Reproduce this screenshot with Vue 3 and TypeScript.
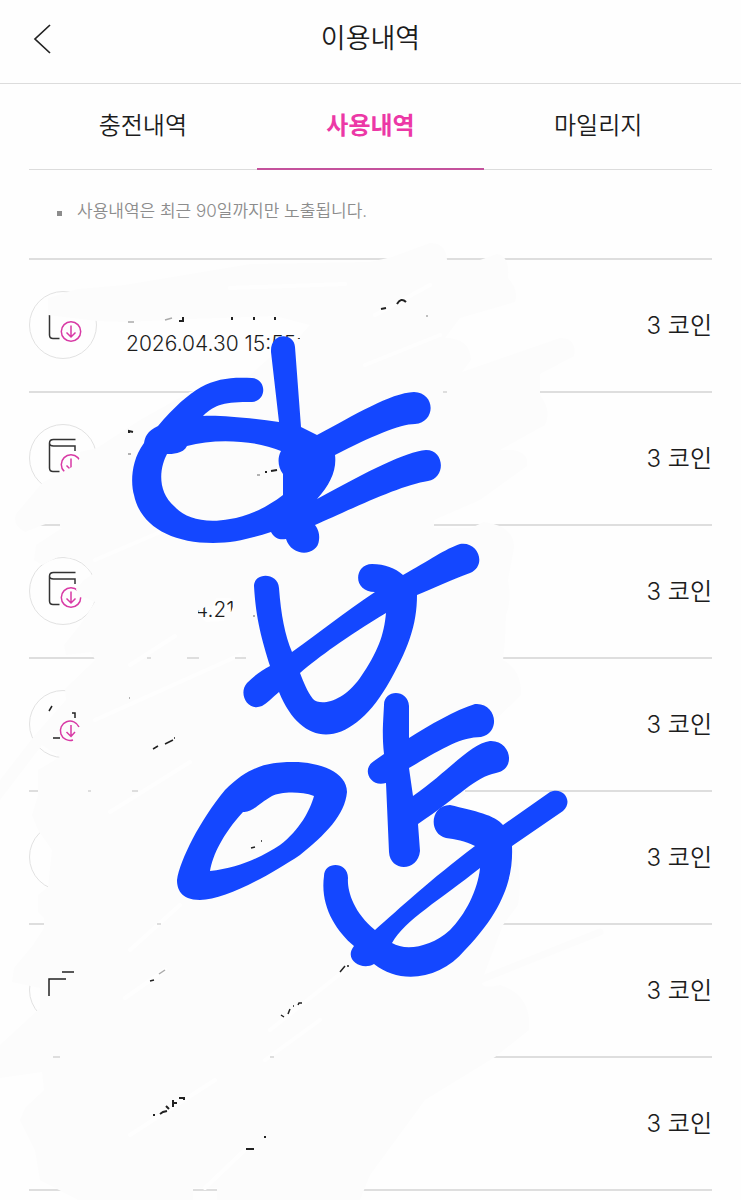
<script setup lang="ts">
import { ref } from 'vue'

type IconKind = 'book' | 'ring' | 'none'

interface Usage {
  id: number
  icon: IconKind
  date: string
  coins: number
}

const tabs: string[] = ['충전내역', '사용내역', '마일리지']
const active = ref<number>(1)

const usages: Usage[] = [
  { id: 1, icon: 'book', date: '2026.04.30 15:55:', coins: 3 },
  { id: 2, icon: 'book', date: '', coins: 3 },
  { id: 3, icon: 'book', date: '2026.04.21', coins: 3 },
  { id: 4, icon: 'ring', date: '', coins: 3 },
  { id: 5, icon: 'ring', date: '', coins: 3 },
  { id: 6, icon: 'ring', date: '', coins: 3 },
  { id: 7, icon: 'none', date: '', coins: 3 },
]
</script>

<template>
  <main class="page">
    <header class="header">
      <button class="back" type="button" aria-label="뒤로">
        <svg width="20" height="32" viewBox="0 0 20 32" aria-hidden="true">
          <path d="M17 2 L2 16 L17 30" fill="none" stroke="#222" stroke-width="1.700" />
        </svg>
      </button>
      <h1 class="title">이용내역</h1>
    </header>

    <nav class="tabs">
      <button
        v-for="(tab, i) in tabs"
        :key="tab"
        type="button"
        class="tab"
        :class="{ active: i === active }"
        @click="active = i"
      >{{ tab }}</button>
    </nav>

    <p class="notice"><span class="bullet"></span>사용내역은 최근 90일까지만 노출됩니다.</p>

    <ul class="list">
      <li v-for="item in usages" :key="item.id" class="row">
        <svg class="icon" width="70" height="70" viewBox="0 0 70 70" aria-hidden="true">
          <circle v-if="item.icon !== 'none'" cx="35" cy="35" r="33.5" fill="none" stroke="#e2e2e2" />
          <g v-if="item.icon === 'book'" fill="none">
            <path
              d="M47.5 16.5H25.500Q21.500 16.500 21.500 20Q21.500 23 25.500 23H47V28M21.500 20V45Q21.500 48.500 25 48.500H31.500"
              stroke="#333" stroke-width="1.500"
            />
            <circle cx="43" cy="41.500" r="9.700" stroke="#d83aa5" stroke-width="1.500" />
            <path d="M43 35.500V47M38.500 42.500L43 47L47.500 42.500" stroke="#d83aa5" stroke-width="1.500" />
          </g>
        </svg>
        <time class="date">{{ item.date }}</time>
        <strong class="coins">{{ item.coins }} 코인</strong>
      </li>
    </ul>

    <svg class="scribble" viewBox="0 0 741 1200" aria-hidden="true">
      <!-- eraser -->
      <path
        fill="#fcfcfc"
        fill-rule="evenodd"
        d="M48 315V298L78 289L125 285L250 264L370 262L392 257L430 243Q446 243 447 260L480 260L497 254Q510 256 508 278Q519 290 515 302L460 318L445 338Q470 338 471 360L462 372L560 338Q577 338 574 356L540 374V395Q552 410 545 425L500 450Q530 448 527 466L480 500L434 520V528L471 528L484 522Q515 526 514 548L508 580Q512 600 506 615L505 640L503 660Q522 670 521 695L480 735L465 780V795L440 830L515 850Q523 880 518 905L503 925L482 980Q480 990 500 985Q532 995 529 1030L495 1057L425 1100L370 1175L360 1200H217V1188H193V1200H78L40 1180L35 1150L20 1120L25 1108L44 1090L42 1072L0 1078V1045L40 1008V988L12 982L14 968L33 945L44 928V918L38 912V895L48 887L52 850L38 830L32 815L38 795V770L60 757L42 745L0 800V780L35 735L66 700L65 689L95 660L91 652L66 655L64 645L80 625L95 602L86 598L78 597L76 589L84 580L93 574L80 560L60 556L42 565L34 560L36 545L62 528L48 523L25 532Q12 525 16 514L32 495L42 483L61 473L72 467L80 458L80 452L97 448L140 420L190 392L250 375L276 352V339H300V336L310 325L275 316L190 319L125 322L97 321Z
           M198 611L209 605L211 611L216 598L231 598L234 604L231 612L225 612L224 621L206 622L198 615Z"
      />
      <path d="M480 980L600 932" stroke="#fcfcfc" stroke-width="7" stroke-linecap="round" />
      <g fill="none" stroke="#fefefe" stroke-width="4" stroke-linecap="round">
        <path d="M230 288L345 284M375 315L430 285M365 365L440 335M95 560L165 530M130 665L175 636M95 720L240 655M110 812L190 762M130 950L180 905M125 998L165 970M270 1030L345 970M130 1135L215 1080M205 1188L250 1145M265 1060L320 1020" />
      </g>
      <g fill="none" stroke="#dedede" stroke-width="2">
        <path d="M443 392H447M50 525H60M147 658H151M187 658H199M235 658H246M88 791H91M132 791H138M157 924H161M53 1057H60M270 1057H274" />
      </g>

      <!-- marks left showing between the eraser strokes -->
      <g fill="none" stroke="#222" stroke-width="1.500">
        <path d="M49 711L52 706M72 713H75V718M53 738H60" />
        <path d="M49 996V979H66M62 972H74" />
        <path d="M179 321H183V317M232 317V320M254 317V320M275 317V320M381 309L386 308M397 304Q401 297 406 302" stroke-width="2" />
        <path d="M165 320L172 318M128 322H134M427 315V317" stroke="#aaa" />
        <path d="M129 433V431L133 432M265 472H267M271 471L277 470" stroke-width="2" />
        <path d="M128 454H131M257 475H260M254 615V617M129 698H130" stroke="#999" />
        <path d="M153 749L158 746M165 744L173 740M174 738H175M251 848L255 847M261 841H262" />
        <path d="M150 981L154 980M340 972L345 966M347 966H349M281 1015L284 1017M288 1014L290 1009M293 1006H294M298 1005L299 1003H302" />
        <path d="M159 974L165 970" stroke="#aaa" />
        <path d="M153 1115H155M160 1114L163 1112L167 1111M166 1106L169 1109M173 1100V1107M173 1103H177M179 1098H184V1100M246 1149H254M264 1137H266" stroke-width="2" />
      </g>
      <g fill="none" stroke="#d83aa5" stroke-width="1.500">
        <path d="M79 727A9.700 9.700 0 1 0 73 740M71 725V736M66.500 732L71 736.500L75 732" />
      </g>

      <!-- blue pen -->
      <g fill="#1447ff" fill-rule="evenodd">
        <path
          d="M252 378C215 376 195 383 158 426C147 431 145 437 144 443C130 462 131 485 134 495C140 525 170 543 213 543C235 543 252 538 271 532C275 539 280 540 286 539C292 558 318 556 319 540C320 532 317 528 315 525C345 512 400 485 428 481C446 478 445 450 426 450C405 452 370 470 317 499C330 485 337 470 335 455C370 437 400 424 415 424C436 422 436 393 414 392C390 393 355 415 317 435L301 427L295 347C294 332 270 332 271 352L279 422C250 418 220 415 203 416C215 404 225 402 252 402C267 401 267 379 252 378Z
             M167 454C172 454 183 454 187 446C215 438 255 440 281 451C277 458 278 468 283 474V495C265 509 245 517 230 519C205 524 185 518 175 507C155 490 161 465 167 454Z"
        />
        <path
          d="M254 586C254 572 278 572 279 588C281 615 285 635 292 652C320 632 345 612 375 592C352 592 354 564 372 564C385 564 395 568 403 575C430 560 445 549 460 544C479 541 487 566 470 573C450 580 435 588 417 595C417 625 408 650 387 686C350 748 303 751 279 692C272 698 267 703 262 706C247 712 238 693 247 683C255 675 262 670 270 666C262 640 256 620 254 586Z
             M386 613C384 635 378 652 360 678C342 703 320 706 313 699C307 691 304 683 300 673C320 656 345 638 386 613Z"
        />
        <path
          d="M293 762C320 762 347 772 347 792C345 815 325 835 300 855C270 875 225 900 200 900C180 900 177 888 177 880C180 860 200 820 225 790C250 765 270 762 293 762Z
             M314 796C300 791 280 792 272 796C258 804 252 813 243 812C222 835 213 855 210 871C240 868 265 855 280 845C300 830 310 810 314 796Z"
        />
        <path
          d="M384 705C384 689 408 689 409 706V738C430 725 455 710 475 704C496 702 502 732 481 737C460 737 440 750 409 768L413 796C450 770 470 744 490 741C511 740 517 769 496 773C475 777 460 796 418 824L420 851C418 872 390 872 389 852L386 783C370 788 361 769 374 761L384 754C382 735 383 725 384 705Z"
        />
        <path
          d="M324 876C324 861 348 861 348 878C347 890 353 912 375 930C400 908 430 880 475 846C465 841 455 839 446 838C428 834 430 805 450 805C475 811 495 815 503 825L550 792C563 786 574 801 563 811L512 846C513 870 509 905 465 950C440 980 400 985 374 964C362 971 343 960 354 946C335 930 320 905 324 876Z
             M480 868C478 890 465 915 450 930C430 948 405 951 392 943C405 920 440 900 480 868Z"
        />
      </g>
    </svg>
  </main>
</template>

<style>
body {
  margin: 0;
  background: #fefefe;
}
</style>

<style scoped>
.page {
  position: relative;
  min-height: 100vh;
  overflow: hidden;
  background: #fefefe;
  color: #1c1c1c;
  font-family: Inter, "Noto Sans CJK KR", sans-serif;
  font-weight: 350;
}

button {
  margin: 0;
  padding: 0;
  border: 0;
  background: none;
  color: inherit;
  font: inherit;
  cursor: pointer;
}

.header {
  display: grid;
  grid-template-columns: 60px 1fr 60px;
  align-items: center;
  box-sizing: border-box;
  height: 84px;
  padding: 0 0 6px;
  border-bottom: 1px solid #dcdcdc;
}

.back {
  display: flex;
  justify-content: flex-end;
  padding-right: 7px;
}

.title {
  margin: 0;
  text-align: center;
  font-size: 27px;
  line-height: 40px;
  font-weight: 350;
}

.tabs {
  display: grid;
  grid-template-columns: repeat(3, 1fr);
  margin: 0 29px;
  border-bottom: 1px solid #dcdcdc;
}

.tab {
  box-sizing: border-box;
  height: 86px;
  margin-bottom: -1px;
  padding-bottom: 1px;
  border-bottom: 2px solid transparent;
  font-size: 24px;
  line-height: 36px;
}

.tab.active {
  border-bottom-color: #c4529c;
  color: #ec38a6;
  font-weight: 700;
}

.notice {
  display: flex;
  align-items: center;
  gap: 15px;
  box-sizing: border-box;
  height: 88px;
  margin: 0;
  padding: 0 57px 6px;
  color: #8c8c8c;
  font-size: 17px;
  line-height: 26px;
}

.bullet {
  width: 5px;
  height: 5px;
  margin-top: 4px;
  background: #8c8c8c;
}

.list {
  margin: 0 29px;
  padding: 0;
  border-top: 2px solid #dedede;
  list-style: none;
}

.row {
  display: flex;
  align-items: center;
  height: 131px;
  border-bottom: 2px solid #dedede;
}

.icon {
  flex: none;
  margin: 0 28px 2px -1px;
}

.date {
  flex: 1;
  padding-top: 36px;
  font-size: 21px;
  line-height: 28px;
}

.coins {
  font-size: 24px;
  line-height: 36px;
  font-weight: 350;
}

.scribble {
  position: absolute;
  top: 0;
  left: 0;
  width: 100%;
  pointer-events: none;
}
</style>
